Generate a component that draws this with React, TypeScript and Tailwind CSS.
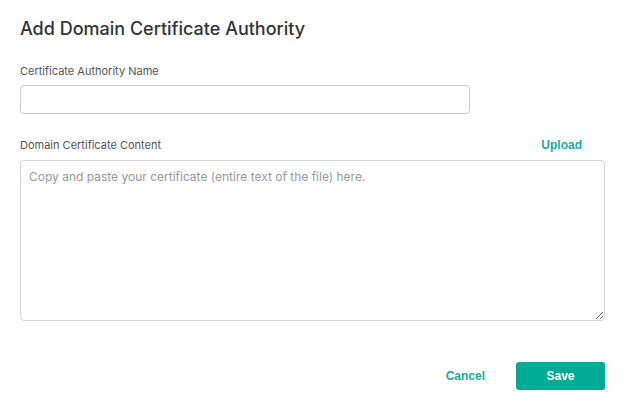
export default function App() {
  return (
    <div className="w-[625px] h-[404px] bg-white px-5 pt-[17px] font-['Inter',sans-serif]">
      <h1 className="text-[18px] leading-[24px] font-medium text-[#333]">Add Domain Certificate Authority</h1>

      <div className="mt-[22px]">
        <label className="block text-[11px] leading-[16px] text-[#555]">Certificate Authority Name</label>
        <input
          type="text"
          className="mt-[6px] block w-[450px] h-[29px] rounded-[4px] border border-[#ccc] bg-white px-2 text-[12px] outline-none"
        />
      </div>

      <div className="mt-[22px] w-[585px]">
        <div className="flex items-center justify-between">
          <label className="text-[11px] leading-[16px] text-[#555]">Domain Certificate Content</label>
          <button type="button" className="mr-[23px] font-['Liberation_Sans',sans-serif] text-[12px] font-bold text-[#16ae96]">
            Upload
          </button>
        </div>
        <textarea
          placeholder="Copy and paste your certificate (entire text of the file) here."
          className="mt-[6px] block w-[585px] h-[161px] rounded-[4px] border border-[#d5d5d5] px-2 py-[8px] text-[12px] leading-[16px] text-[#333] placeholder:text-[#999] outline-none"
        />
      </div>

      <div className="mt-[41px] flex w-[585px] items-center justify-end gap-[31px] font-['Liberation_Sans',sans-serif]">
        <button type="button" className="text-[12px] font-bold text-[#16ae96]">Cancel</button>
        <button type="button" className="h-[28px] w-[89px] rounded-[3px] bg-[#00ab94] text-[12px] font-bold text-white">
          Save
        </button>
      </div>
    </div>
  );
}
